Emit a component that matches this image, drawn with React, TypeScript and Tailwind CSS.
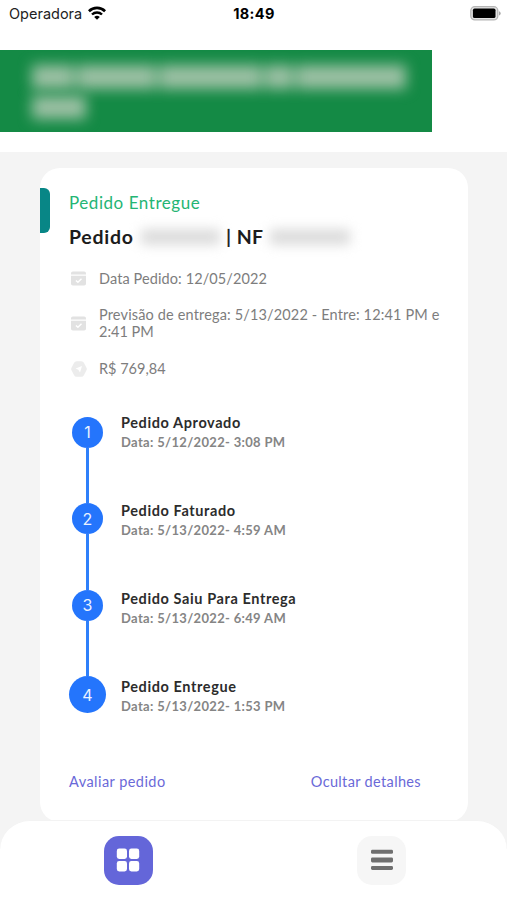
import clsx from 'clsx'

// ============================================================================
// Types
// ============================================================================

interface Step {
  title: string
  date: string
}

// ============================================================================
// Constants
// ============================================================================

const STEPS: Step[] = [
  { title: 'Pedido Aprovado', date: 'Data: 5/12/2022- 3:08 PM' },
  { title: 'Pedido Faturado', date: 'Data: 5/13/2022- 4:59 AM' },
  { title: 'Pedido Saiu Para Entrega', date: 'Data: 5/13/2022- 6:49 AM' },
  { title: 'Pedido Entregue', date: 'Data: 5/13/2022- 1:53 PM' },
]

// ============================================================================
// Icons
// ============================================================================

function WifiIcon() {
  return (
    <svg className="h-[14px] w-[18px]" viewBox="0 0 18 14" fill="none">
      <path d="M.9 5.2a11.4 11.4 0 0 1 16.2 0" stroke="#000" strokeWidth="2.7" />
      <path d="M4 8.5a7.2 7.2 0 0 1 10 0" stroke="#000" strokeWidth="2.4" />
      <path d="M9 13.8 6.2 11a4 4 0 0 1 5.6 0Z" fill="#000" />
    </svg>
  )
}

function BatteryIcon() {
  return (
    <svg className="h-[15px] w-[31px]" viewBox="0 0 31 15">
      <rect x="0.8" y="0.7" width="27" height="13.2" rx="4" fill="#e4e4e4" stroke="#b5b5b5" strokeWidth="1.3" />
      <rect x="2.9" y="2.6" width="22.6" height="9.4" rx="1.6" fill="#000" />
      <path d="M29 5.2q1.7.6 1.7 2.2T29 9.6Z" fill="#a8a8a8" />
    </svg>
  )
}

function CalendarIcon() {
  return (
    <svg className="h-[15px] w-[15px] shrink-0" viewBox="0 0 15 15" fill="none">
      <path d="M0 3.6V2.2Q0 .4 1.8.4h11.4q1.8 0 1.8 1.8v1.4Z" fill="#e2e2e2" />
      <path d="M0 4.8h15v8q0 1.8-1.8 1.8H1.8Q0 14.6 0 12.8Z" fill="#e2e2e2" />
      <path d="m4.9 9.4 2 1.9 3.6-3.6" stroke="#fff" strokeWidth="1.4" />
    </svg>
  )
}

function PriceIcon() {
  return (
    <svg className="h-4 w-4 shrink-0" viewBox="0 0 16 16">
      <path d="M5.6 3h4.8L13 8l-2.6 5H5.6L3 8Z" fill="#ececec" stroke="#ececec" strokeWidth="5.6" strokeLinejoin="round" />
      <path d="m4.6 7.5 6.4-2.6-2 6.5-1.7-2.7Z" fill="#fff" />
    </svg>
  )
}

function GridIcon() {
  return (
    <svg className="h-6 w-6" viewBox="0 0 24 24" fill="#fff">
      <rect x="0.8" y="0.6" width="10.2" height="10.4" rx="2.4" />
      <rect x="13" y="0.6" width="10.2" height="10.4" rx="2.4" />
      <rect x="0.8" y="13" width="10.2" height="10.4" rx="2.4" />
      <rect x="13" y="13" width="10.2" height="10.4" rx="2.4" />
    </svg>
  )
}

function MenuIcon() {
  return (
    <svg className="h-[22px] w-[22px]" viewBox="0 0 22 22" fill="#6f6f6f">
      <rect y="0.8" width="22" height="4" rx="1.4" />
      <rect y="8.4" width="22" height="5" rx="1.4" />
      <rect y="16.9" width="22" height="4" rx="1.4" />
    </svg>
  )
}

// ============================================================================
// Sections
// ============================================================================

function StatusBar() {
  return (
    <div className="flex h-[50px] items-start justify-between bg-white pr-[6px] pl-[9px] font-['Inter',sans-serif] text-black">
      <div className="flex w-[180px] items-start gap-[6px]">
        <span className="mt-[4px] text-[14.5px] leading-5 whitespace-nowrap text-[#222]">Operadora</span>
        <div className="mt-[6px]">
          <WifiIcon />
        </div>
      </div>
      <span className="mt-[4px] -ml-[2px] text-[14.5px] leading-5 font-bold tracking-[0.35px]">18:49</span>
      <div className="mt-[6px] flex w-[180px] justify-end">
        <BatteryIcon />
      </div>
    </div>
  )
}

// Company name stays hidden, only its blurred shape is shown
function CompanyBanner() {
  return (
    <div className="h-[102px] bg-white">
      <div className="h-[82px] w-[432px] overflow-hidden bg-[#148a45] pt-[15px] pl-[32px]">
        <div className="flex gap-[3px] blur-[7px]">
          <div className="h-[24px] w-[42px] bg-[#9cc0a4]" />
          <div className="h-[24px] w-[79px] bg-[#9cc0a4]" />
          <div className="h-[24px] w-[103px] bg-[#9cc0a4]" />
          <div className="h-[24px] w-[28px] bg-[#9cc0a4]" />
          <div className="h-[24px] w-[110px] bg-[#9cc0a4]" />
        </div>
        <div className="mt-[7px] h-[23px] w-[54px] bg-[#9cc0a4] blur-[7px]" />
      </div>
    </div>
  )
}

function OrderTimeline() {
  return (
    <div className="mt-[37px] flex">
      <div className="flex w-[37px] flex-col items-center pt-[2.5px]">
        {STEPS.map((step, i) => {
          const isLast = i === STEPS.length - 1
          return (
            <div key={step.title} className="flex flex-col items-center">
              <div
                className={clsx(
                  "flex shrink-0 items-center justify-center rounded-full bg-[#2475fc] font-['Inter',sans-serif] text-[16px] text-[#eaf2ff]",
                  isLast ? 'h-[37px] w-[37px]' : 'h-[31px] w-[31px]'
                )}
              >
                {i + 1}
              </div>
              {!isLast && <div className="h-[55.5px] w-[3px] bg-[#2f80fa]" />}
            </div>
          )
        })}
      </div>
      <div className="ml-[15px] flex flex-col">
        {STEPS.map((step) => (
          <div key={step.title} className="h-[88px] whitespace-nowrap">
            <p className="text-[14.5px] leading-[18px] font-bold tracking-[0.6px] text-[#2c2c2c]">{step.title}</p>
            <p className="mt-px text-[13px] leading-[18px] font-bold tracking-[0.33px] text-[#858585]">{step.date}</p>
          </div>
        ))}
      </div>
    </div>
  )
}

function OrderCard() {
  return (
    <div className="mr-[39px] ml-10 h-[654px] rounded-[20px] bg-white">
      <div className="flex pt-5">
        <div className="h-[45px] w-[10px] rounded-r-[6px] bg-[#088686]" />
        <div className="ml-[19px] flex-1">
          <p className="mt-[4px] text-[17px] leading-[22px] tracking-[0.55px] text-[#24b574]">Pedido Entregue</p>
          <div className="mt-[11px] flex h-6 items-center text-[19.5px] leading-6 font-bold whitespace-nowrap text-[#1c1c1c]">
            <span className="w-[72px] tracking-[0.75px]">Pedido</span>
            <span className="h-[16px] w-[79px] bg-[#dcdcdc] blur-[6px]" />
            <span className="ml-[6px] w-[44px] tracking-[0.4px]">| NF</span>
            <span className="h-[16px] w-[80px] bg-[#dcdcdc] blur-[6px]" />
          </div>

          {/* Order details */}
          <div className="mt-[21px] flex flex-col text-[14.5px] leading-[17px] text-[#7d7d7d]">
            <div className="flex items-center pl-[2px]">
              <CalendarIcon />
              <span className="ml-[13px] tracking-[0.1px]">Data Pedido: 12/05/2022</span>
            </div>
            <div className="mt-[19px] flex items-center pl-[2px]">
              <CalendarIcon />
              <span className="ml-[13px] tracking-[0.15px] whitespace-nowrap">
                Previsão de entrega: 5/13/2022 - Entre: 12:41 PM e
                <br />
                <span className="tracking-normal">2:41 PM</span>
              </span>
            </div>
            <div className="mt-[20px] flex items-center pl-[2px]">
              <PriceIcon />
              <span className="ml-[12px]">R$ 769,84</span>
            </div>
          </div>

          <OrderTimeline />
        </div>
      </div>

      {/* Actions */}
      <div className="mt-[7px] flex justify-between pr-[47px] pl-[29px] text-[14.5px] leading-[18px] text-[#6a69d8]">
        <button className="tracking-[0.45px]">Avaliar pedido</button>
        <button className="tracking-[0.35px]">Ocultar detalhes</button>
      </div>
    </div>
  )
}

function BottomNav() {
  return (
    <div className="flex h-[80px] justify-between rounded-t-[30px] border-t border-[#f3f3f3] bg-white pr-[101px] pl-[103.5px] pt-[14.5px]">
      <button className="flex h-[49px] w-[49px] items-center justify-center rounded-[15px] bg-[#6466d9]">
        <GridIcon />
      </button>
      <button className="flex h-[49px] w-[49px] items-center justify-center rounded-[15px] bg-[#f6f6f6]">
        <MenuIcon />
      </button>
    </div>
  )
}

// ============================================================================
// Component
// ============================================================================

export default function App() {
  return (
    <div className="flex h-[900px] w-[507px] flex-col overflow-hidden bg-[#f4f4f4] font-['Lato',sans-serif]">
      <StatusBar />
      <CompanyBanner />
      <main className="h-[668px] shrink-0 overflow-hidden pt-4">
        <OrderCard />
      </main>
      <BottomNav />
    </div>
  )
}
